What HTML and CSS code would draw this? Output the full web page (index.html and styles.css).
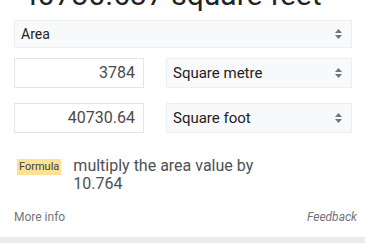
FILE: index.html
```html
<!DOCTYPE html>
<html>
  <head>
    <title>Area converter</title>
    <link rel="stylesheet" href="styles.css">
  </head>
  <body>
    <div class="card">
      <div class="result">40730.637 square feet</div>

      <div class="select wide">
        <span>Area</span>
        <svg class="arrows" width="7" height="10" viewBox="0 0 7 10"><path d="M3.5 0L7 4H0z M3.5 10L0 6h7z" fill="#70757a"/></svg>
      </div>

      <div class="row">
        <div class="value">3784</div>
        <div class="select">
          <span>Square metre</span>
          <svg class="arrows" width="7" height="10" viewBox="0 0 7 10"><path d="M3.5 0L7 4H0z M3.5 10L0 6h7z" fill="#70757a"/></svg>
        </div>
      </div>

      <div class="row">
        <div class="value">40730.64</div>
        <div class="select">
          <span>Square foot</span>
          <svg class="arrows" width="7" height="10" viewBox="0 0 7 10"><path d="M3.5 0L7 4H0z M3.5 10L0 6h7z" fill="#70757a"/></svg>
        </div>
      </div>

      <div class="formula">
        <span class="badge">Formula</span>
        <span class="formula-text">multiply the area value by 10.764</span>
      </div>

      <div class="footer">
        <span>More info</span>
        <span class="feedback">Feedback</span>
      </div>
    </div>
    <div class="bottom-bar"></div>
  </body>
</html>
```
FILE: styles.css
```css
body {
  margin: 0;
  font-family: Roboto, "Liberation Sans", Arial, sans-serif;
  background: #fff;
  overflow: hidden;
}

.card {
  padding: 0 13px 0 14px;
  height: 237px;
  overflow: hidden;
}

.result {
  font-size: 30px;
  line-height: 36px;
  margin-top: -23px;
  margin-left: 7px;
  color: #222;
  white-space: nowrap;
}

.select {
  display: flex;
  align-items: center;
  justify-content: space-between;
  background: #f8f9fa;
  border: 1px solid #eceff1;
  box-sizing: border-box;
  padding: 0 9px 0 6px;
  color: #222;
  font-size: 15px;
}

.select.wide {
  margin-top: 7px;
  height: 28px;
  font-size: 14px;
}

.arrows {
  flex: none;
}

.row {
  display: flex;
  gap: 22px;
  height: 30px;
  margin-top: 10px;
}

.row + .row {
  margin-top: 15px;
}

.value {
  width: 130px;
  box-sizing: border-box;
  border: 1px solid #e3e5e8;
  text-align: right;
  padding: 0 8px;
  line-height: 28px;
  font-size: 16px;
  color: #4a4a4a;
}

.row .select {
  flex: 1;
}

.formula {
  display: flex;
  gap: 12px;
  margin-top: 24px;
  align-items: flex-start;
}

.badge {
  background: #fde293;
  color: #3c4043;
  font-size: 11px;
  line-height: 16px;
  padding: 0 2px;
  margin-left: 3px;
  margin-top: 2px;
}

.formula-text {
  font-size: 16px;
  line-height: 18px;
  color: #4d5156;
  width: 200px;
}

.footer {
  display: flex;
  justify-content: space-between;
  margin-top: 17px;
  font-size: 12px;
  color: #70757a;
}

.feedback {
  font-style: italic;
  margin-right: -5px;
}

.bottom-bar {
  height: 6px;
  background: #ebebeb;
}
```
